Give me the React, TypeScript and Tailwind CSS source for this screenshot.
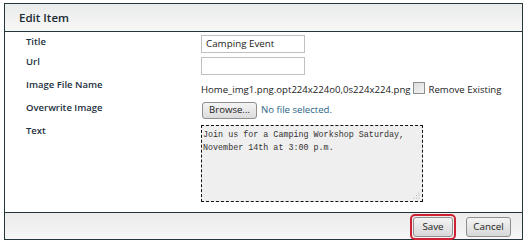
import React from "react";

const sans = { fontFamily: '"Segoe UI", "Open Sans", "Liberation Sans", Arial, sans-serif' } as React.CSSProperties;

function Label({ children, className = "" }: { children: React.ReactNode; className?: string }) {
  return (
    <div className={`w-[196px] shrink-0 pl-[21px] text-[9.5px] leading-[14px] font-semibold text-[#1c3040] ${className}`}>
      {children}
    </div>
  );
}

export default function App() {
  return (
    <div className="w-[529px] h-[245px] bg-white pt-[3px] pl-[4px]" style={sans}>
      <div className="w-[519px] h-[237px] border border-[#23363a] flex flex-col">
        <div className="h-[28px] shrink-0 border-b border-[#23363a] bg-gradient-to-b from-[#e9eceb] to-[#f7f7f6] flex items-center pl-[14px]">
          <span className="text-[11.5px] font-semibold text-[#1a2a30] leading-none">Edit Item</span>
        </div>
        <div className="flex-1 flex flex-col pt-[3px]">
          <div className="flex h-[18px]">
            <Label className="pt-0">Title</Label>
            <div className="w-[104px] h-[18px] border border-[#c0c0c0] bg-white flex items-center pl-[4px] text-[9.8px] text-[#222]">
              Camping Event
            </div>
          </div>
          <div className="flex h-[18px] mt-[4px]">
            <Label className="-mt-[2px]">Url</Label>
            <div className="w-[104px] h-[18px] border border-[#c0c0c0] bg-white" />
          </div>
          <div className="flex mt-[4px] h-[22px]">
            <Label className="-mt-[1px]">Image File Name</Label>
            <div className="flex items-center h-[14px] mt-[4px] text-[9.6px] text-[#222] whitespace-nowrap">
              <span>Home_img1.png.opt224x224o0,0s224x224.png</span>
              <span className="ml-[2px] w-[12px] h-[12px] border border-[#8e8e8e] bg-gradient-to-br from-[#dcdcdc] to-[#f4f4f4] -mt-[4px]" />
              <span className="ml-[4px]">Remove Existing</span>
            </div>
          </div>
          <div className="flex mt-[1px] h-[17px]">
            <Label className="-mt-[1px]">Overwrite Image</Label>
            <div className="flex items-center">
              <div className="w-[55px] h-[17px] border border-[#8f8f8f] rounded-[3px] bg-gradient-to-b from-[#f4f4f4] to-[#dcdcdc] flex items-center justify-center text-[9.6px] text-[#222] ml-[1px]">
                Browse...
              </div>
              <span className="ml-[4px] text-[9.6px] text-[#2a6585]">No file selected.</span>
            </div>
          </div>
          <div className="flex mt-[6px]">
            <Label className="-mt-[1px]">Text</Label>
            <div
              className="w-[222px] h-[77px] border border-dashed border-[#111] bg-[#efefef] pl-[1px] pt-[3px] text-[8.4px] leading-[13px] text-[#333] relative"
              style={{ fontFamily: '"Liberation Mono", "Courier New", monospace' }}
            >
              <div>Join us for a Camping Workshop Saturday,</div>
              <div>November 14th at 3:00 p.m.</div>
              <svg className="absolute right-[2px] bottom-[2px]" width="7" height="7" viewBox="0 0 7 7">
                <circle cx="6" cy="1" r="0.6" fill="#aaa" />
                <circle cx="6" cy="3.5" r="0.6" fill="#aaa" />
                <circle cx="3.5" cy="3.5" r="0.6" fill="#aaa" />
                <circle cx="6" cy="6" r="0.6" fill="#aaa" />
                <circle cx="3.5" cy="6" r="0.6" fill="#aaa" />
                <circle cx="1" cy="6" r="0.6" fill="#aaa" />
              </svg>
            </div>
          </div>
        </div>
        <div className="h-[27px] shrink-0 border-t border-[#23363a] bg-gradient-to-b from-[#ebebeb] to-[#f8f6f6] flex items-end justify-end pr-[11px]">
          <div className="border-2 border-[#cc2233] rounded-[5px] p-[1px] mb-[-1px] h-[26px] flex items-center">
            <div className="w-[40px] h-[20px] border border-[#8f8f8f] rounded-[3px] bg-gradient-to-b from-[#f4f4f4] to-[#d8d8d8] flex items-center justify-center text-[9.8px] text-[#222]">
              Save
            </div>
          </div>
          <div className="ml-[10px] mb-[2px] w-[45px] h-[20px] border border-[#8f8f8f] rounded-[3px] bg-gradient-to-b from-[#f4f4f4] to-[#d8d8d8] flex items-center justify-center text-[9.8px] text-[#222]">
            Cancel
          </div>
        </div>
      </div>
    </div>
  );
}
